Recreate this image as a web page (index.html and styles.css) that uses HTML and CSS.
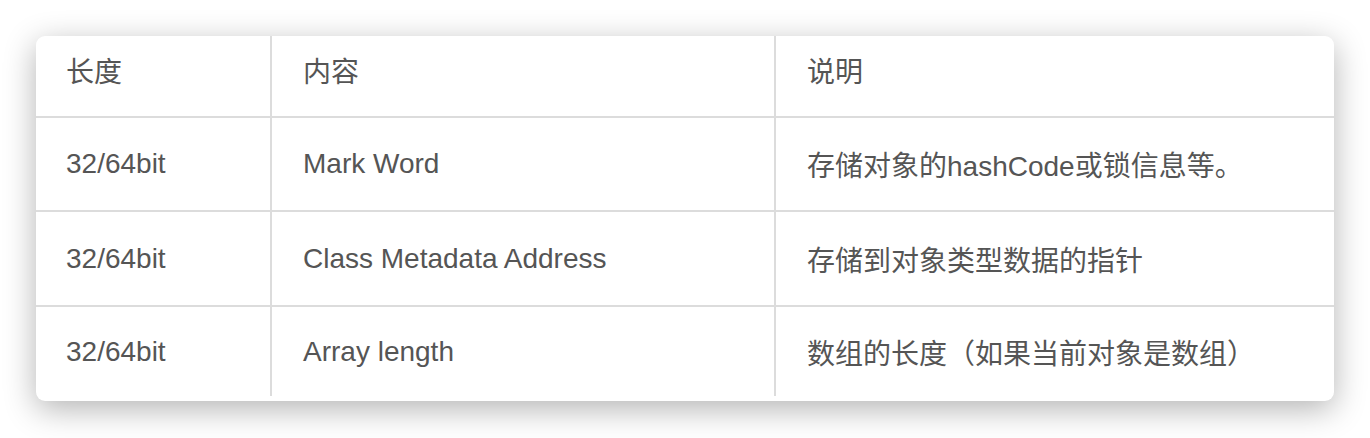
FILE: index.html
```html
<!DOCTYPE html>
<html lang="zh">
<head>
<meta charset="utf-8">
<link rel="stylesheet" href="styles.css">
</head>
<body>
<div class="page">
  <div class="card">
    <table class="grid">
      <colgroup>
        <col class="c1"><col class="c2"><col class="c3">
      </colgroup>
      <thead>
        <tr class="head"><th>长度</th><th>内容</th><th>说明</th></tr>
      </thead>
      <tbody>
        <tr class="r1"><td>32/64bit</td><td>Mark Word</td><td>存储对象的hashCode或锁信息等。</td></tr>
        <tr class="r2"><td>32/64bit</td><td>Class Metadata Address</td><td>存储到对象类型数据的指针</td></tr>
        <tr class="r3"><td>32/64bit</td><td>Array length</td><td>数组的长度（如果当前对象是数组）</td></tr>
      </tbody>
    </table>
  </div>
</div>
</body>
</html>
```

FILE: styles.css
```css
html, body {
  margin: 0;
  padding: 0;
  background: #ffffff;
}
.page {
  padding: 36px 36px 37px 36px;
}
.card {
  width: 1298px;
  height: 365px;
  box-sizing: border-box;
  background: #fff;
  border-radius: 9px;
  box-shadow: 0 8px 32px rgba(0, 0, 0, 0.3);
  overflow: hidden;
}
.grid {
  border-collapse: collapse;
  table-layout: fixed;
  width: 1298px;
  font-family: "Liberation Sans", "Noto Sans CJK SC", sans-serif;
  font-size: 28px;
  color: #555;
}
.c1 { width: 235px; }
.c2 { width: 504px; }
.c3 { width: 559px; }
th, td {
  text-align: left;
  font-weight: normal;
  padding: 0 0 0 30px;
  border-right: 2px solid #dcdcdc;
  border-bottom: 2px solid #dcdcdc;
  white-space: nowrap;
  vertical-align: middle;
}
th:last-child, td:last-child { border-right: none; }
tr.r3 td { border-bottom: none; }
td:nth-child(2), th:nth-child(2) { padding-left: 31px; }
td:nth-child(3), th:nth-child(3) { padding-left: 31px; }
tr.head th { height: 68px; padding-bottom: 12px; }
tr.r1 td { height: 92px; }
tr.r2 td { height: 93px; }
tr.r3 td { height: 89px; }
```
